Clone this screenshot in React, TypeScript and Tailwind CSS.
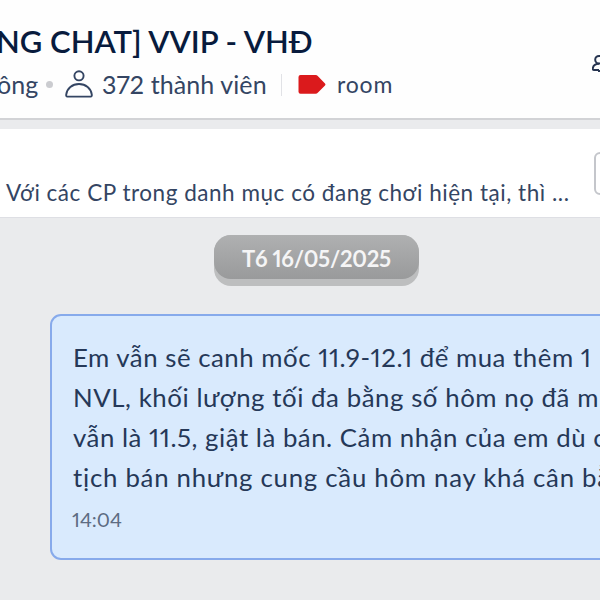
import React from "react";

const PersonIcon = () => (
  <svg
    width="30"
    height="30"
    viewBox="0 0 30 30"
    fill="none"
    stroke="#344563"
    strokeWidth="1.9"
    strokeLinejoin="round"
    className="shrink-0"
  >
    <circle cx="15" cy="5.8" r="4.6" />
    <path d="M3.3 26.6Q2 26.6 2.2 24.6C2.9 18.2 8.3 14 15 14S27.1 18.2 27.8 24.6Q28 26.6 26.7 26.6Z" />
  </svg>
);

const TagIcon = () => (
  <svg width="28" height="20" viewBox="0 0 28 20" className="shrink-0">
    <path
      d="M2.5 0.1H17.5Q19 0.1 20 1.2L27 8.4Q28 9.4 27 10.4L20 17.6Q19 18.8 17.5 18.8H2.5Q0.5 18.8 0.5 16.8V2.1Q0.5 0.1 2.5 0.1Z"
      fill="#db1a1c"
    />
  </svg>
);

const AddMemberIcon = () => (
  <svg
    width="24"
    height="24"
    viewBox="0 0 24 24"
    fill="none"
    stroke="#273550"
    strokeWidth="2"
    strokeLinejoin="round"
    className="shrink-0"
  >
    <circle cx="7" cy="9.7" r="3.8" />
    <path d="M7 20H2Q0.6 20 0.8 18.4C1.2 15.6 3.4 13.8 7 13.8M7 20V22" />
  </svg>
);

const lines = [
  { text: "Em vẫn sẽ canh mốc 11.9-12.1 để mua thêm 1", style: "tracking-[0.52px]" },
  { text: "NVL, khối lượng tối đa bằng số hôm nọ đã m", style: "tracking-[0.56px]" },
  { text: "vẫn là 11.5, giật là bán. Cảm nhận của em dù c", style: "tracking-[0.52px]" },
  { text: "tịch bán nhưng cung cầu hôm nay khá cân bằ", style: "tracking-[0.73px]" },
];

const App = () => {
  return (
    <div className="w-full h-[600px] overflow-hidden flex flex-col bg-[#eaebed] font-['Lato',sans-serif] proportional-nums whitespace-nowrap text-[#344563]">
      {/* Header */}
      <header className="h-[120px] shrink-0 flex bg-[#fefefe] border-b-2 border-[#d2d3d6]">
        <div className="w-[592px] shrink-0 flex flex-col pt-[21px]">
          <div className="h-10 -ml-1 leading-10 text-[31px] font-semibold text-[#081b3d]">
            NG CHAT] VVIP - VHĐ
          </div>
          <div className="h-[47px] flex items-center text-[25px]">
            <span className="w-[49px] -ml-[3px]">ông</span>
            <span className="w-[7px] h-[7px] rounded-full bg-[#cbccd0] shrink-0" />
            <span className="ml-[11px]">
              <PersonIcon />
            </span>
            <span className="ml-2 w-[179px] tracking-[0.1px]">372 thành viên</span>
            <span className="w-px h-[22px] bg-[#e1e2e6] shrink-0" />
            <span className="ml-4">
              <TagIcon />
            </span>
            <span className="ml-[11px] text-[23px] tracking-[0.8px]">room</span>
          </div>
        </div>
        <div className="pt-[50px]">
          <AddMemberIcon />
        </div>
      </header>

      {/* Pinned message */}
      <section className="mt-[9px] h-[89px] shrink-0 flex bg-white border-b border-[#dedfe4]">
        <div className="w-[594px] shrink-0 pl-[6px] pt-[44px] text-[22.5px] tracking-[0.53px] leading-10">
          Với các CP trong danh mục có đang chơi hiện tại, thì ...
        </div>
        <div className="mt-[23px] w-20 h-[43px] shrink-0 rounded-md border-2 border-[#c4c6cb]" />
      </section>

      {/* Conversation */}
      <main className="flex-1 flex flex-col">
        <div className="mt-[17px] ml-[214px] w-[205px] h-[51px] rounded-[17px] bg-[#bdbebf]">
          <div className="h-11 rounded-[17px] bg-linear-to-b from-[#afb0b1] to-[#999a9b] text-center leading-[47px] text-[22px] tracking-[-0.25px] font-bold text-[#f5f5f6]">
            T6 16/05/2025
          </div>
        </div>
        <div className="mt-7 ml-[50px] w-[620px] h-[246px] shrink-0 rounded-[11px] border-2 border-[#87aaeb] bg-[#d9eafd] pl-[21px] pt-[21px]">
          {lines.map((line) => (
            <div key={line.text} className="h-10 leading-10 text-[25.8px] text-[#253858]">
              <span className={line.style}>{line.text}</span>
            </div>
          ))}
          <div className="mt-1 -ml-px leading-9 text-[20px] text-[#5d6c82]">14:04</div>
        </div>
      </main>
    </div>
  );
};

export default App;
